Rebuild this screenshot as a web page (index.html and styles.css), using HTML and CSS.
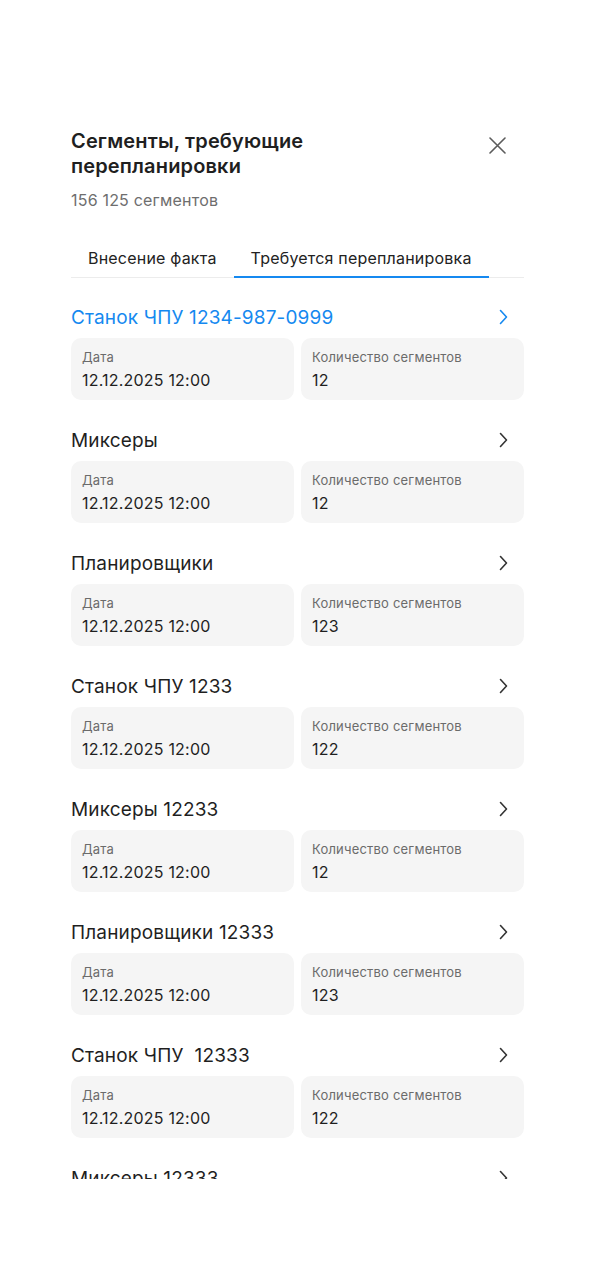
FILE: index.html
```html
<!DOCTYPE html>
<html lang="ru">
<head>
    <meta charset="UTF-8">
    <meta name="viewport" content="width=device-width, initial-scale=1.0">
    <title>Сегменты, требующие перепланировки</title>
    <link rel="stylesheet" href="styles.css">
</head>
<body>
    <div class="sheet">
        <div class="header">
            <h1 class="title">Сегменты, требующие перепланировки</h1>
            <button class="close" type="button" aria-label="Закрыть">
                <svg width="17" height="17" viewBox="0 0 17 17" fill="none">
                    <path d="M1 1L16 16M16 1L1 16" stroke="#5c5c5c" stroke-width="1.6" stroke-linecap="round"/>
                </svg>
            </button>
        </div>
        <div class="subtitle">156 125 сегментов</div>

        <div class="tabs">
            <div class="tab">Внесение факта</div>
            <div class="tab active">Требуется перепланировка</div>
        </div>

        <div class="list">
            <div class="item">
                <div class="item-head highlight">
                    <span>Станок ЧПУ 1234-987-0999</span>
                    <svg class="chevron" width="9" height="16" viewBox="0 0 9 16" fill="none"><path d="M1.5 1.5L7.5 8L1.5 14.5" stroke="currentColor" stroke-width="1.6" stroke-linecap="round" stroke-linejoin="round"/></svg>
                </div>
                <div class="cards">
                    <div class="card"><div class="label">Дата</div><div class="value">12.12.2025 12:00</div></div>
                    <div class="card"><div class="label">Количество сегментов</div><div class="value">12</div></div>
                </div>
            </div>
            <div class="item">
                <div class="item-head">
                    <span>Миксеры</span>
                    <svg class="chevron" width="9" height="16" viewBox="0 0 9 16" fill="none"><path d="M1.5 1.5L7.5 8L1.5 14.5" stroke="currentColor" stroke-width="1.6" stroke-linecap="round" stroke-linejoin="round"/></svg>
                </div>
                <div class="cards">
                    <div class="card"><div class="label">Дата</div><div class="value">12.12.2025 12:00</div></div>
                    <div class="card"><div class="label">Количество сегментов</div><div class="value">12</div></div>
                </div>
            </div>
            <div class="item">
                <div class="item-head">
                    <span>Планировщики</span>
                    <svg class="chevron" width="9" height="16" viewBox="0 0 9 16" fill="none"><path d="M1.5 1.5L7.5 8L1.5 14.5" stroke="currentColor" stroke-width="1.6" stroke-linecap="round" stroke-linejoin="round"/></svg>
                </div>
                <div class="cards">
                    <div class="card"><div class="label">Дата</div><div class="value">12.12.2025 12:00</div></div>
                    <div class="card"><div class="label">Количество сегментов</div><div class="value">123</div></div>
                </div>
            </div>
            <div class="item">
                <div class="item-head">
                    <span>Станок ЧПУ 1233</span>
                    <svg class="chevron" width="9" height="16" viewBox="0 0 9 16" fill="none"><path d="M1.5 1.5L7.5 8L1.5 14.5" stroke="currentColor" stroke-width="1.6" stroke-linecap="round" stroke-linejoin="round"/></svg>
                </div>
                <div class="cards">
                    <div class="card"><div class="label">Дата</div><div class="value">12.12.2025 12:00</div></div>
                    <div class="card"><div class="label">Количество сегментов</div><div class="value">122</div></div>
                </div>
            </div>
            <div class="item">
                <div class="item-head">
                    <span>Миксеры 12233</span>
                    <svg class="chevron" width="9" height="16" viewBox="0 0 9 16" fill="none"><path d="M1.5 1.5L7.5 8L1.5 14.5" stroke="currentColor" stroke-width="1.6" stroke-linecap="round" stroke-linejoin="round"/></svg>
                </div>
                <div class="cards">
                    <div class="card"><div class="label">Дата</div><div class="value">12.12.2025 12:00</div></div>
                    <div class="card"><div class="label">Количество сегментов</div><div class="value">12</div></div>
                </div>
            </div>
            <div class="item">
                <div class="item-head">
                    <span>Планировщики 12333</span>
                    <svg class="chevron" width="9" height="16" viewBox="0 0 9 16" fill="none"><path d="M1.5 1.5L7.5 8L1.5 14.5" stroke="currentColor" stroke-width="1.6" stroke-linecap="round" stroke-linejoin="round"/></svg>
                </div>
                <div class="cards">
                    <div class="card"><div class="label">Дата</div><div class="value">12.12.2025 12:00</div></div>
                    <div class="card"><div class="label">Количество сегментов</div><div class="value">123</div></div>
                </div>
            </div>
            <div class="item">
                <div class="item-head">
                    <span>Станок ЧПУ&nbsp; 12333</span>
                    <svg class="chevron" width="9" height="16" viewBox="0 0 9 16" fill="none"><path d="M1.5 1.5L7.5 8L1.5 14.5" stroke="currentColor" stroke-width="1.6" stroke-linecap="round" stroke-linejoin="round"/></svg>
                </div>
                <div class="cards">
                    <div class="card"><div class="label">Дата</div><div class="value">12.12.2025 12:00</div></div>
                    <div class="card"><div class="label">Количество сегментов</div><div class="value">122</div></div>
                </div>
            </div>
            <div class="item">
                <div class="item-head">
                    <span>Миксеры 12333</span>
                    <svg class="chevron" width="9" height="16" viewBox="0 0 9 16" fill="none"><path d="M1.5 1.5L7.5 8L1.5 14.5" stroke="currentColor" stroke-width="1.6" stroke-linecap="round" stroke-linejoin="round"/></svg>
                </div>
                <div class="cards">
                    <div class="card"><div class="label">Дата</div><div class="value">12.12.2025 12:00</div></div>
                    <div class="card"><div class="label">Количество сегментов</div><div class="value">12</div></div>
                </div>
            </div>
        </div>
    </div>
</body>
</html>
```

FILE: styles.css
```css
body {
    margin: 0;
    background: #ffffff;
    font-family: Inter, "Noto Sans", sans-serif;
    color: #1f1f1f;
}
.sheet {
    padding: 129px 72px 0 71px;
}
.header {
    display: flex;
    justify-content: space-between;
    align-items: flex-start;
}
.title {
    margin: 0;
    max-width: 330px;
    font-size: 20px;
    line-height: 25px;
    font-weight: 600;
    letter-spacing: 0.15px;
    color: #1f1f1f;
}
.close {
    margin: 8px 18px 0 0;
    padding: 0;
    border: none;
    background: none;
    display: flex;
    cursor: pointer;
}
.subtitle {
    margin-top: 11px;
    font-size: 16px;
    line-height: 20px;
    letter-spacing: 0.2px;
    color: #6e6e6e;
}
.tabs {
    display: flex;
    margin-top: 28px;
    border-bottom: 1px solid #ececec;
}
.tab {
    padding: 10px 17px 8px;
    margin-bottom: -1px;
    font-size: 16px;
    line-height: 20px;
    letter-spacing: 0.2px;
    color: #222222;
    border-bottom: 2px solid transparent;
}
.tab.active {
    border-bottom-color: #1589f0;
}
.list {
    height: 901px;
    overflow: hidden;
    padding-top: 27px;
    box-sizing: border-box;
}
.item {
    margin-bottom: 28px;
}
.item-head {
    display: flex;
    justify-content: space-between;
    align-items: center;
    height: 24px;
    font-size: 19px;
    letter-spacing: 0.15px;
    color: #1f1f1f;
}
.item-head.highlight {
    color: #1589f0;
}
.chevron {
    margin-right: 16px;
    color: #333333;
}
.highlight .chevron {
    color: #1589f0;
}
.cards {
    display: grid;
    grid-template-columns: 1fr 1fr;
    gap: 7px;
    margin-top: 9px;
}
.card {
    background: #f5f5f5;
    border-radius: 10px;
    padding: 11px 11px 9px;
}
.label {
    font-size: 13px;
    line-height: 17px;
    letter-spacing: 0.2px;
    color: #6b6b6b;
}
.value {
    margin-top: 3px;
    font-size: 16px;
    line-height: 22px;
    letter-spacing: 0.2px;
    color: #1f1f1f;
}
```
